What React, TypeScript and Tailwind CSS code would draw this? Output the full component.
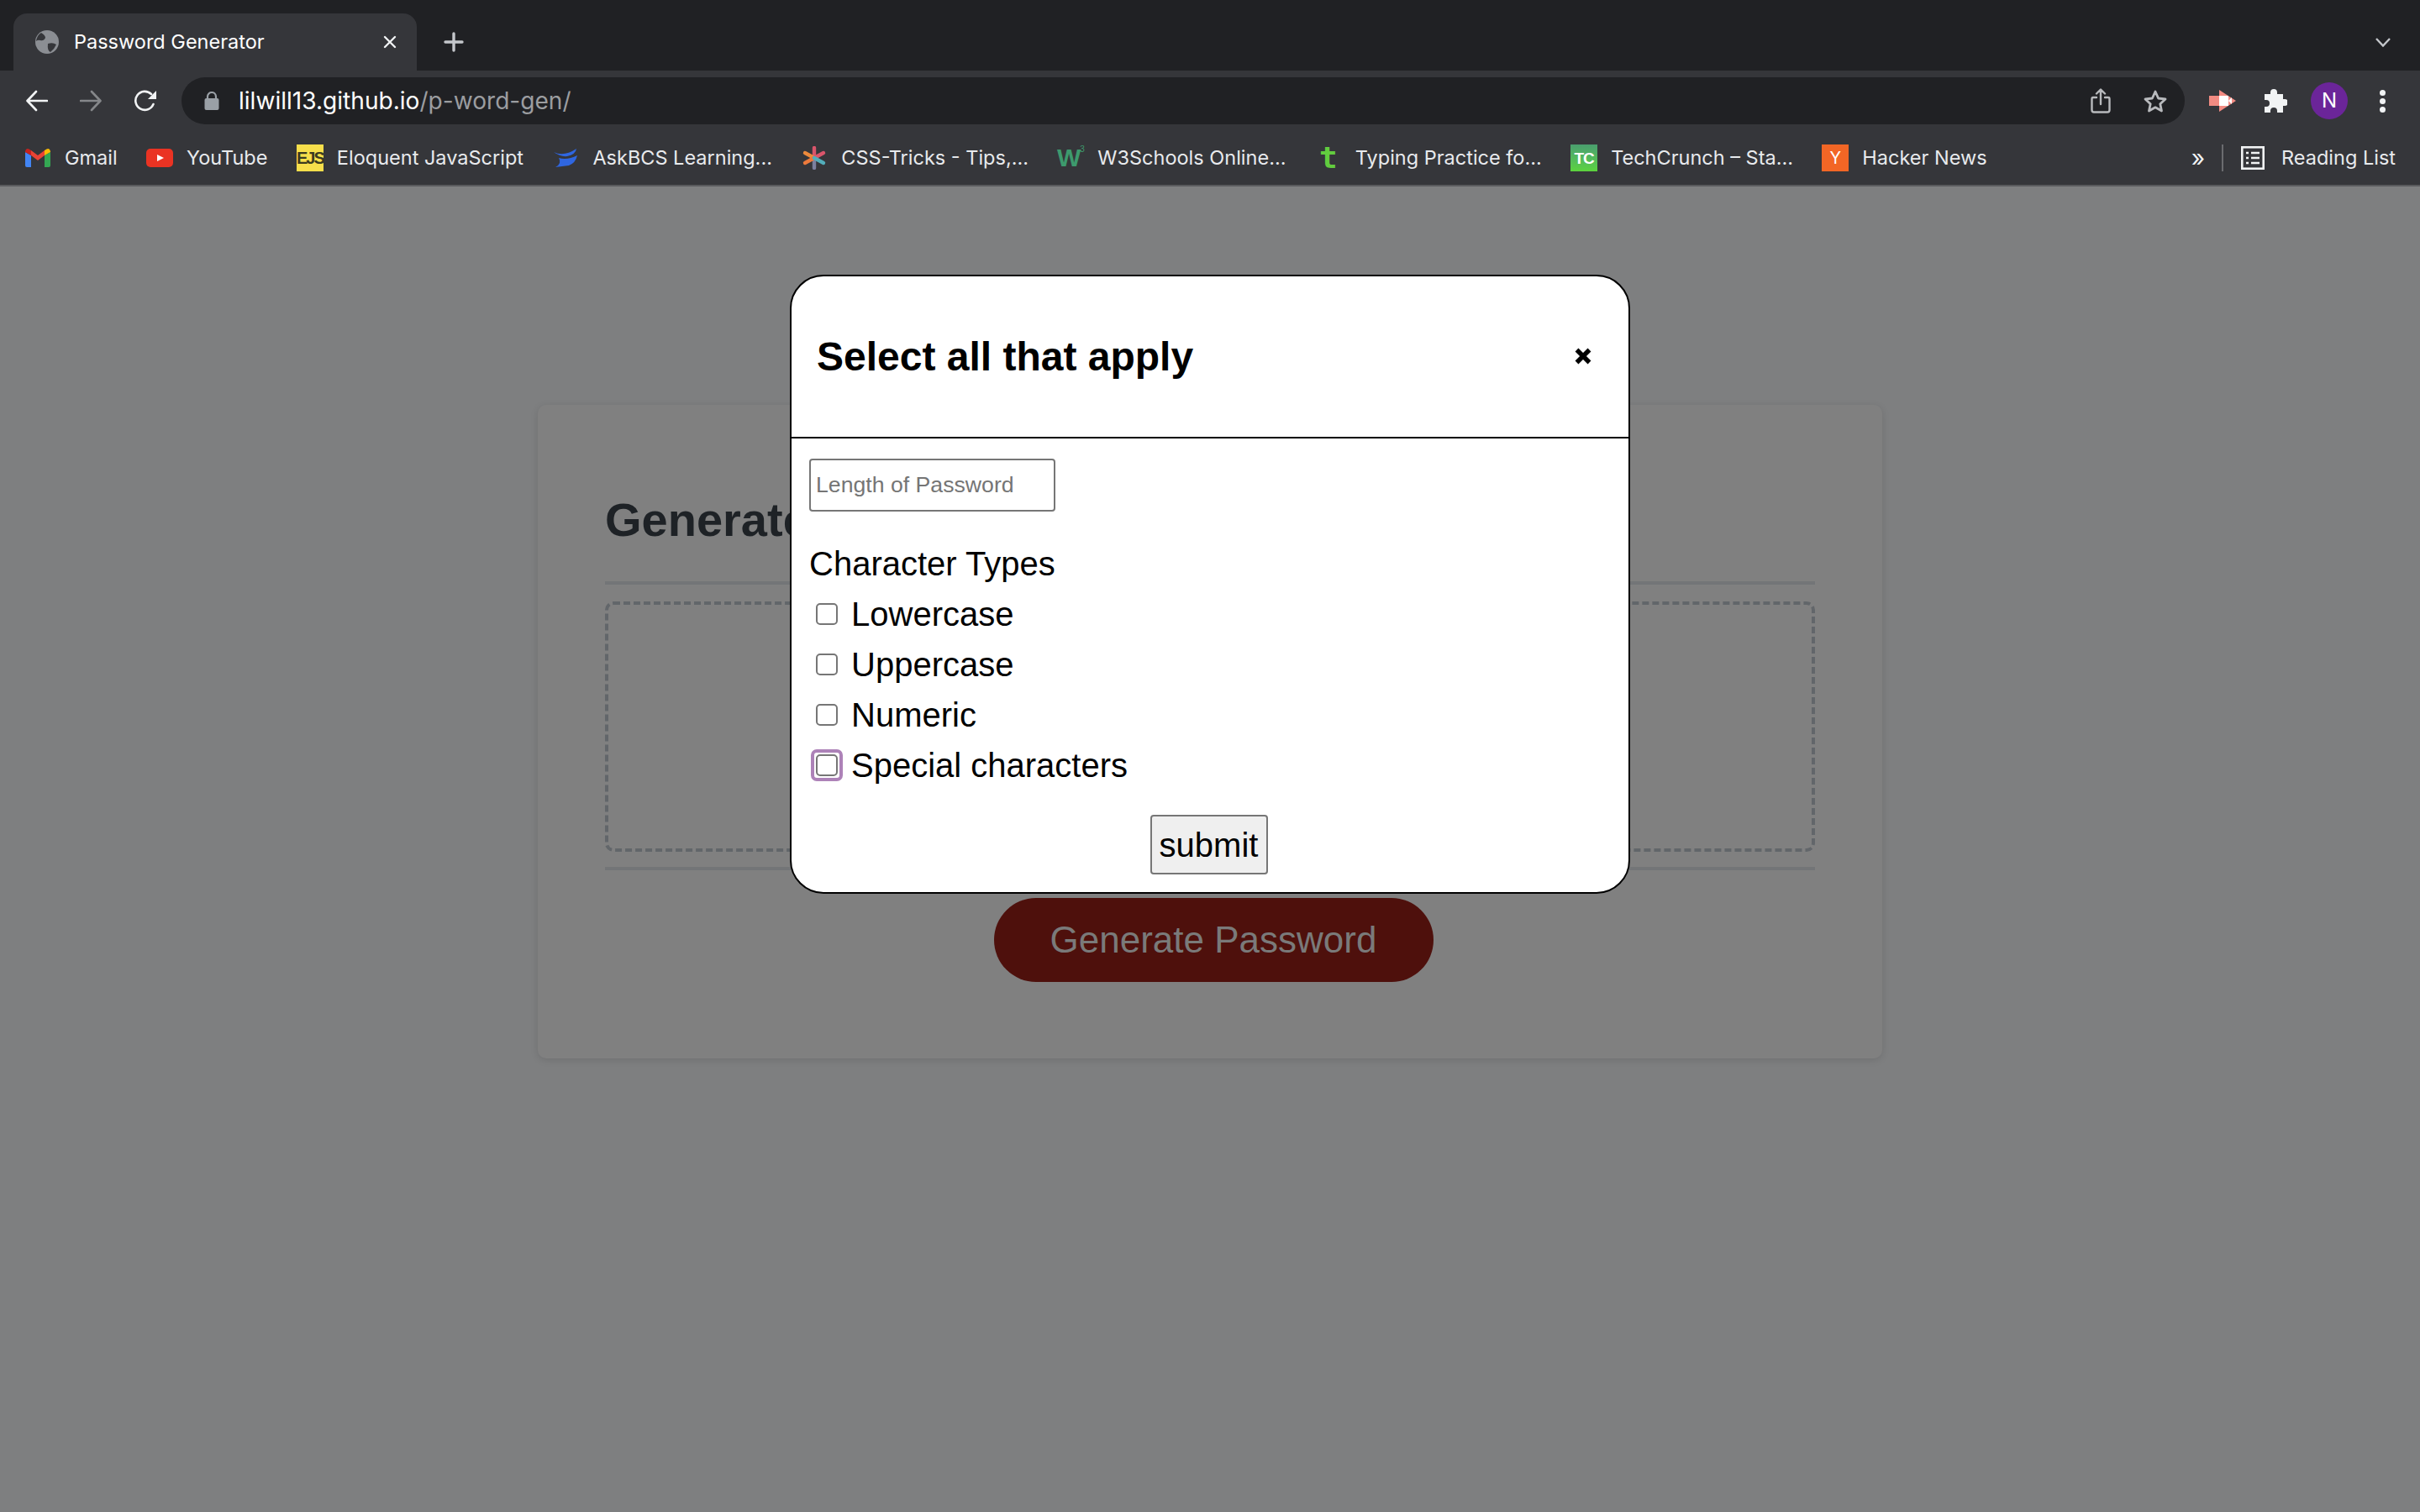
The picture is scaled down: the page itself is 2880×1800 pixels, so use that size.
import { ReactNode } from "react"

const uiFont = "font-['Inter',sans-serif]"

function GmailIcon() {
  return (
    <svg width="30" height="22" viewBox="0 0 30 22">
      <path d="M0 4 L0 20 Q0 22 2 22 L7 22 L7 8 Z" fill="#4285f4" />
      <path d="M23 8 L23 22 L28 22 Q30 22 30 20 L30 4 Z" fill="#34a853" />
      <path d="M7 8 L15 14 L23 8 L23 2 L15 8 L7 2 Z" fill="#ea4335" />
      <path d="M0 4 L7 8 L7 2 L4.5 0.5 Q1 -1 0 3 Z" fill="#c5221f" />
      <path d="M23 2 L23 8 L30 4 L30 3 Q29 -1 25.5 0.5 Z" fill="#fbbc04" />
    </svg>
  )
}

function Bookmark({ icon, label }: { icon: ReactNode; label: string }) {
  return (
    <div className="flex items-center gap-[16px]">
      <div className="flex h-8 w-8 shrink-0 items-center justify-center">{icon}</div>
      <span className="whitespace-nowrap">{label}</span>
    </div>
  )
}

function BrowserChrome() {
  return (
    <div className={`${uiFont} text-[23.5px] text-[#e8eaed]`}>
      {/* tab strip */}
      <div className="flex h-[84px] items-end bg-[#202124] pl-[16px]">
        <div className="flex h-[68px] w-[480px] items-center rounded-t-[16px] bg-[#35363a] pr-[24px] pl-[26px]">
          <svg width="28" height="28" viewBox="0 0 28 28" className="shrink-0">
            <circle cx="14" cy="14" r="14" fill="#8b8e93" />
            <path d="M7 3 Q12 6 12 9 Q10 13 6 12 Q3 11 1 13 Q2 6 7 3 Z M15 16 Q21 14 25 17 Q23 22 18 26 Q14 24 15 16 Z" fill="#35363a" />
          </svg>
          <span className="ml-[18px] flex-1 whitespace-nowrap text-white">Password Generator</span>
          <svg width="16" height="16" viewBox="0 0 16 16" stroke="#f1f3f4" strokeWidth="2.4" strokeLinecap="round">
            <path d="M2 2 L14 14 M14 2 L2 14" />
          </svg>
        </div>
        <div className="ml-[32px] flex h-[68px] w-[24px] items-center">
          <svg width="24" height="24" viewBox="0 0 24 24" stroke="#c4c7cb" strokeWidth="3.4" strokeLinecap="round">
            <path d="M12 2 V22 M2 12 H22" />
          </svg>
        </div>
        <div className="flex-1" />
        <div className="flex h-[68px] items-center pr-[35px]">
          <svg width="18" height="11" viewBox="0 0 18 11" fill="none" stroke="#c4c7cb" strokeWidth="2.4">
            <path d="M1 1 L9 9.5 L17 1" />
          </svg>
        </div>
      </div>

      {/* address bar */}
      <div className="flex h-[72px] items-center bg-[#35363a] pr-[36px] pl-[31px]">
        <svg width="26" height="26" viewBox="0 0 26 26" fill="none" stroke="#f1f3f4" strokeWidth="2.6" strokeLinecap="round" strokeLinejoin="round">
          <path d="M25 13 H2 M12 2 L1.5 13 L12 24" />
        </svg>
        <svg width="26" height="26" viewBox="0 0 26 26" fill="none" stroke="#85878a" strokeWidth="2.6" strokeLinecap="round" strokeLinejoin="round" className="ml-[38px]">
          <path d="M1 13 H24 M14 2 L24.5 13 L14 24" />
        </svg>
        <svg width="28" height="26" viewBox="0 0 28 26" fill="none" className="ml-[38px]">
          <path d="M23.5 17 A11 11 0 1 1 21 5" stroke="#f1f3f4" strokeWidth="2.6" strokeLinecap="round" />
          <path d="M27 1 V11 H17 Z" fill="#f1f3f4" />
        </svg>
        <div className="ml-[29px] flex h-[56px] w-[2384px] items-center rounded-full bg-[#202124] pl-[27px]">
          <svg width="18" height="22" viewBox="0 0 18 22" fill="#9aa0a6">
            <rect x="0.5" y="8" width="17" height="14" rx="2" />
            <path d="M4 9 V6 A5 5 0 0 1 14 6 V9" fill="none" stroke="#9aa0a6" strokeWidth="2.2" />
          </svg>
          <span className="ml-[23px] text-[28.1px] whitespace-nowrap text-white">
            lilwill13.github.io<span className="text-[#9b9da0]">/p-word-gen/</span>
          </span>
          <div className="flex-1" />
          <svg width="24" height="30" viewBox="0 0 24 30" fill="none" stroke="#b8babd" strokeWidth="2.4" strokeLinecap="round" strokeLinejoin="round">
            <path d="M7 11 H3 Q1.5 11 1.5 13 V26 Q1.5 28.5 4 28.5 H20 Q22.5 28.5 22.5 26 V13 Q22.5 11 21 11 H17 M12 19 V2 M7 6.5 L12 1.5 L17 6.5" />
          </svg>
          <svg width="30" height="29" viewBox="0 0 30 29" fill="none" stroke="#b8babd" strokeWidth="2.8" strokeLinejoin="round" className="mr-[20px] ml-[38px]">
            <path d="M15 3 L18.6 11 L27 12 L20.8 17.8 L22.5 26 L15 21.8 L7.5 26 L9.2 17.8 L3 12 L11.4 11 Z" />
          </svg>
        </div>
        <svg width="32" height="26" viewBox="0 0 32 26" className="ml-[29px]">
          <path d="M12 0 L32 13 L12 26 Z" fill="#f28b82" />
          <rect x="0" y="7" width="22" height="12" fill="#f28b82" />
          <rect x="12" y="7" width="11" height="12" fill="#ffffff" />
          <path d="M23 13 L27 9 V17 Z" fill="#ffffff" />
        </svg>
        <svg width="30" height="28" viewBox="0 0 30 28" fill="#f1f3f4" className="ml-[31px]">
          <path d="M3 6 H10 V4 A4 4 0 0 1 18 4 V6 H25 V12 H27 A4 4 0 0 1 27 20 H25 V28 H18 V26 A4 4 0 0 0 10 26 V28 H3 V21 H5 A4 4 0 0 0 5 13 H3 Z" />
        </svg>
        <div className="ml-[28px] flex h-[44px] w-[44px] items-center justify-center rounded-full bg-[#6b2599] text-[24px] text-white">
          N
        </div>
        <div className="ml-[38px] flex flex-col gap-[3px]">
          <div className="h-[7px] w-[7px] rounded-full bg-[#f1f3f4]" />
          <div className="h-[7px] w-[7px] rounded-full bg-[#f1f3f4]" />
          <div className="h-[7px] w-[7px] rounded-full bg-[#f1f3f4]" />
        </div>
      </div>

      {/* bookmarks */}
      <div className="box-content flex h-[64px] items-center gap-[34.4px] border-b-2 border-[#5a5b5e] bg-[#35363a] pl-[29px]">
        <Bookmark icon={<GmailIcon />} label="Gmail" />
        <Bookmark
          icon={
            <svg width="32" height="22" viewBox="0 0 32 22">
              <rect width="32" height="22" rx="5" fill="#ea3323" />
              <path d="M13 7 L21 11 L13 15 Z" fill="#ffffff" />
            </svg>
          }
          label="YouTube"
        />
        <Bookmark
          icon={
            <div className="flex h-8 w-8 items-center justify-center bg-[#f7df4b] font-['Liberation_Sans',sans-serif] text-[20px] leading-none font-bold tracking-[-2px] text-[#3b3a20]">
              EJS
            </div>
          }
          label="Eloquent JavaScript"
        />
        <Bookmark
          icon={
            <svg width="28" height="22" viewBox="0 0 28 22" fill="#2f66e0">
              <path d="M0 4 Q12 10 27 0 Q26 7 16 9 Q8 10 0 4 Z" />
              <path d="M6 11 Q16 14 28 8 Q26 17 18 20 L2 22 Q10 18 6 11 Z" />
            </svg>
          }
          label="AskBCS Learning..."
        />
        <Bookmark
          icon={
            <svg width="28" height="28" viewBox="0 0 28 28" strokeWidth="4.4" strokeLinecap="round">
              <path d="M14 14 L14 2" stroke="#d9556b" />
              <path d="M14 14 L14 26" stroke="#7b7f9e" />
              <path d="M14 14 L3 8" stroke="#ec8a3c" />
              <path d="M14 14 L3 20" stroke="#ec7a3c" />
              <path d="M14 14 L25 8" stroke="#d9556b" />
              <path d="M14 14 L25 20" stroke="#52adba" />
            </svg>
          }
          label="CSS-Tricks - Tips,..."
        />
        <Bookmark
          icon={
            <div className="flex items-start font-['Liberation_Sans',sans-serif] leading-none font-bold text-[#3d9a6d]">
              <span className="text-[30px] tracking-[-1px]">W</span>
              <span className="text-[10px] font-normal">3</span>
            </div>
          }
          label="W3Schools Online..."
        />
        <Bookmark
          icon={
            <span className="font-['DejaVu_Sans_Mono',monospace] text-[36px] leading-none font-bold text-[#62cc3f]">t</span>
          }
          label="Typing Practice fo..."
        />
        <Bookmark
          icon={
            <div className="flex h-8 w-8 items-center justify-center bg-linear-to-b from-[#4a9e6e] to-[#5cd33c] font-['Liberation_Sans',sans-serif] text-[19px] leading-none font-bold tracking-[-1px] text-white">
              TC
            </div>
          }
          label="TechCrunch – Sta..."
        />
        <Bookmark
          icon={
            <div className="flex h-8 w-8 items-center justify-center bg-[#f26625] text-[20px] leading-none text-white">
              Y
            </div>
          }
          label="Hacker News"
        />
        <div className="flex-1" />
        <div className="flex items-center">
          <span className="text-[28px] leading-none text-[#f1f3f4]">»</span>
          <div className="mr-[21px] ml-[20px] h-[32px] w-[2px] bg-[#6b6c6f]" />
          <svg width="28" height="28" viewBox="0 0 28 28" fill="none" stroke="#f1f3f4" strokeWidth="2.6" className="mr-[20px]">
            <rect x="1.3" y="1.3" width="25.4" height="25.4" />
            <path d="M6 8 H9 M12 8 H22 M6 14 H9 M12 14 H22 M6 20 H9 M12 20 H22" />
          </svg>
          <span className="mr-[29px] whitespace-nowrap">Reading List</span>
        </div>
      </div>
    </div>
  )
}

function CharacterOption({ label, focused }: { label: string; focused?: boolean }) {
  return (
    <div className="flex h-[60px] items-center pl-[8px]">
      <div className="relative h-[26px] w-[26px] rounded-[5px] border-2 border-[#767676] bg-white">
        {focused && <div className="absolute -inset-[8px] rounded-[7px] border-4 border-[#ad82b8]" />}
      </div>
      <span className="ml-[16px]">{label}</span>
    </div>
  )
}

function PasswordDialog() {
  return (
    <div className="absolute top-[105px] left-1/2 w-[1000px] -translate-x-1/2 overflow-hidden rounded-[40px] border-2 border-black bg-white font-['Liberation_Sans',sans-serif] text-black">
      <div className="flex h-[193px] items-center justify-between border-b-2 border-black pr-[44px] pl-[30px]">
        <h5 className="text-[48px] leading-[72px] font-bold">Select all that apply</h5>
        <svg width="20" height="20" viewBox="0 0 20 20" stroke="#000" strokeWidth="5.5" className="-mt-[2px]">
          <path d="M2.5 2.5 L17.5 17.5 M17.5 2.5 L2.5 17.5" />
        </svg>
      </div>
      <div className="px-[21px] pt-[24px] pb-[21px] text-[40px] leading-[60px]">
        <input
          type="text"
          placeholder="Length of Password"
          className="block h-[63px] w-[293px] rounded-[4px] border-2 border-[#767676] px-[6px] text-[26.67px] placeholder:text-[#757575]"
        />
        <div className="mt-[32px]">Character Types</div>
        <CharacterOption label="Lowercase" />
        <CharacterOption label="Uppercase" />
        <CharacterOption label="Numeric" />
        <CharacterOption label="Special characters" focused />
        <div className="mt-[29px] flex justify-center pr-[3px]">
          <button className="h-[71px] w-[140px] rounded-[4px] border-2 border-[#767676] bg-[#efefef]">submit</button>
        </div>
      </div>
    </div>
  )
}

export default function App() {
  return (
    <div className="h-[1800px] w-[2880px] overflow-hidden bg-[#7e7f80]">
      <BrowserChrome />
      <main className="relative pt-[260px] font-['Liberation_Sans',sans-serif]">
        <div className="mx-auto h-[778px] w-[1600px] rounded-[10px] bg-[#808080] px-[80px] pt-[95px] shadow-[0_2px_10px_rgba(0,0,0,0.12)]">
          <h4 className="border-b-4 border-[#737577] pb-[31px] text-[56px] leading-[84px] font-bold text-[#1e2226]">
            Generate a Password
          </h4>
          <div className="mt-[20px] h-[298px] rounded-[10px] border-4 border-dashed border-[#62666a]" />
          <div className="mt-[18px] h-[4px] bg-[#737577]" />
          <div className="mt-[33px] flex justify-center pl-[8px]">
            <button className="h-[100px] w-[523px] rounded-full bg-[#4e100c] text-[44px] text-[#7a7a7a]">
              Generate Password
            </button>
          </div>
        </div>
        <PasswordDialog />
      </main>
    </div>
  )
}
